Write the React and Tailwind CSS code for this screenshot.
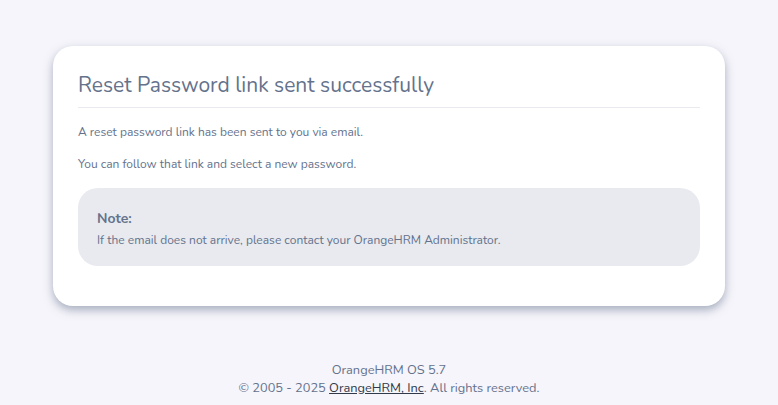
import React from "react";

const App = () => {
  return (
    <div
      className="min-h-screen bg-[#f6f5fb] flex flex-col items-center pt-[46px] text-[#64728c]"
      style={{ fontFamily: "Nunito, Lato, 'Noto Sans', sans-serif" }}
    >
      <div className="w-[672px] bg-white rounded-[20px] shadow-[0_4px_10px_rgba(100,114,140,0.55)] px-[25px] pt-[25px] pb-[40px]">
        <h1 className="text-[21px] leading-[28px] pb-[8px] border-b border-[#e8eaef]">
          Reset Password link sent successfully
        </h1>
        <p className="text-[12px] leading-[18px] mt-[15px]">
          A reset password link has been sent to you via email.
        </p>
        <p className="text-[12px] leading-[18px] mt-[14px]">
          You can follow that link and select a new password.
        </p>
        <div className="mt-[15px] bg-[#e8eaef] rounded-[20px] px-[19px] pt-[21px] pb-[17px]">
          <p className="text-[14px] leading-[20px] font-bold">Note:</p>
          <p className="text-[12px] leading-[18px] mt-[2px]">
            If the email does not arrive, please contact your OrangeHRM Administrator.
          </p>
        </div>
      </div>
      <div className="mt-[55px] text-[12.8px] leading-[18px] text-center">
        <p>OrangeHRM OS 5.7</p>
        <p>
          © 2005 - 2025{" "}
          <a href="#" className="underline text-[#303a4a]">
            OrangeHRM, Inc
          </a>
          . All rights reserved.
        </p>
      </div>
    </div>
  );
};

export default App;
